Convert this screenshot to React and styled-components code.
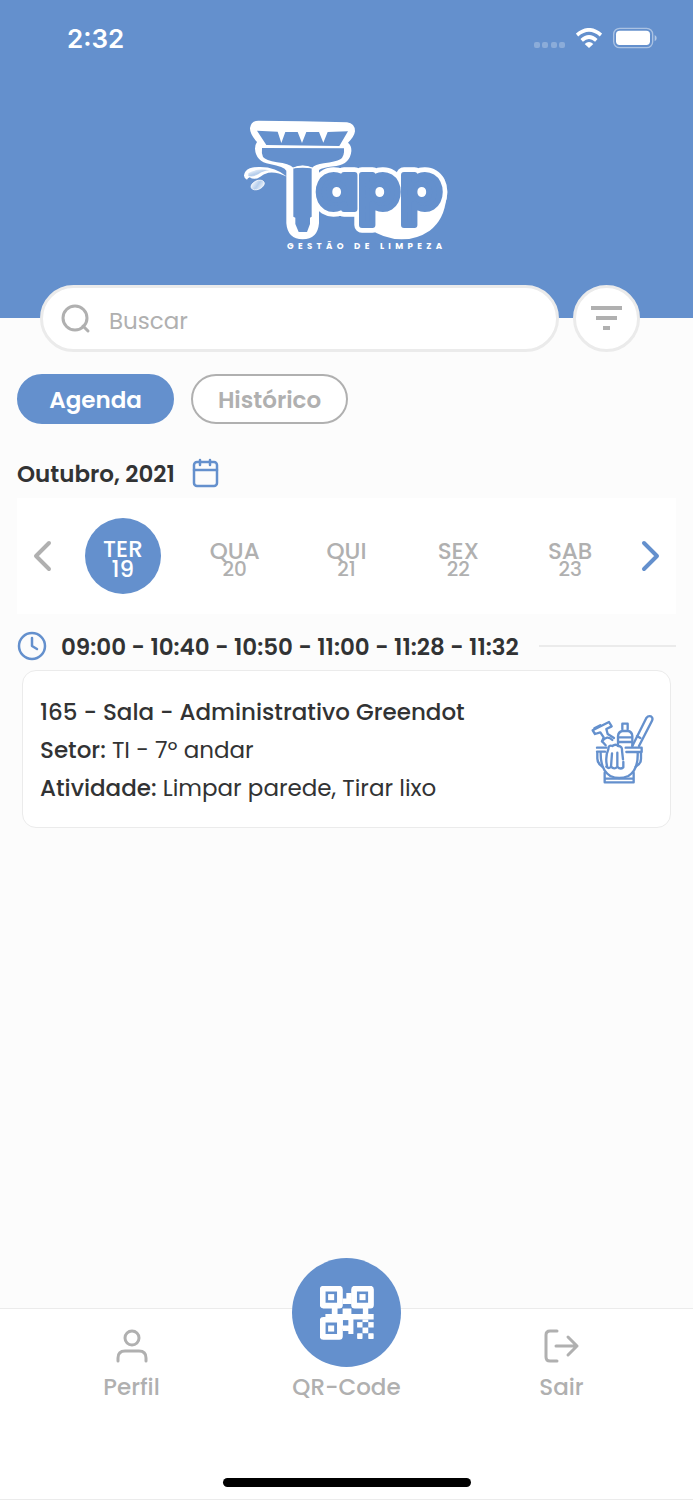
import React from 'react';
import styled, { createGlobalStyle } from 'styled-components';

const BLUE = '#6490cd';
const GRAY = '#b0b0b0';
const LINE = '#ebebeb';
const DARK = '#323334';

const DAYS = [
  { name: 'TER', date: 19 },
  { name: 'QUA', date: 20 },
  { name: 'QUI', date: 21 },
  { name: 'SEX', date: 22 },
  { name: 'SAB', date: 23 },
];
const TIMES = ['09:00', '10:40', '10:50', '11:00', '11:28', '11:32'];

const GlobalStyle = createGlobalStyle`
  * { box-sizing: border-box; }
  body {
    margin: 0;
    background: #fcfcfc;
    color: ${DARK};
    font-family: Poppins, Inter, "Liberation Sans", sans-serif;
    font-feature-settings: "cv11";
  }
  button, input {
    font: inherit;
    font-feature-settings: inherit;
    color: inherit;
  }
  button {
    padding: 0;
    border: 0;
    background: none;
    cursor: pointer;
  }
  svg { display: block; }
`;

const Screen = styled.div`
  display: flex;
  flex-direction: column;
  min-height: 100vh;
`;

const Header = styled.header`
  display: flex;
  flex-direction: column;
  height: 318px;
  background: ${BLUE};
  color: #fff;
`;

const StatusBar = styled.div`
  display: flex;
  align-items: center;
  justify-content: space-between;
  height: 76px;
  padding: 0 36px 0 67px;
`;

const Clock = styled.time`
  font-family: Inter, "Liberation Sans", sans-serif;
  font-size: 26px;
  font-weight: 600;
`;

const StatusIcons = styled.div`
  display: flex;
  align-items: center;
  gap: 11px;
`;

const Brand = styled.div`
  display: flex;
  justify-content: center;
  padding: 34px 4px 0 0;
`;

const SearchRow = styled.form`
  display: flex;
  gap: 14px;
  margin-top: -33px;
  padding: 0 53px 0 40px;
`;

const SearchBox = styled.label`
  display: flex;
  flex: 1;
  align-items: center;
  gap: 18px;
  min-width: 0;
  height: 67px;
  padding: 0 18px;
  border: 3px solid ${LINE};
  border-radius: 34px;
  background: #fff;
`;

const SearchInput = styled.input`
  flex: 1;
  width: 100%;
  min-width: 0;
  padding: 4px 0 0;
  border: 0;
  outline: 0;
  background: transparent;
  font-size: 23px;
  font-weight: 400;
  &::placeholder {
    color: ${GRAY};
    opacity: 1;
  }
`;

const FilterButton = styled.button`
  display: flex;
  flex: none;
  align-items: center;
  justify-content: center;
  width: 67px;
  height: 67px;
  border: 3px solid ${LINE};
  border-radius: 50%;
  background: #fff;
`;

const Content = styled.main`
  flex: 1;
  padding: 22px 17px;
`;

const Tabs = styled.div`
  display: flex;
  gap: 17px;
`;

const Tab = styled.button`
  width: 157px;
  height: 50px;
  padding-top: 2px;
  border: 2px solid ${p => (p.$active ? BLUE : GRAY)};
  border-radius: 25px;
  background: ${p => (p.$active ? BLUE : '#fff')};
  color: ${p => (p.$active ? '#fff' : GRAY)};
  font-size: 23px;
  font-weight: 600;
`;

const MonthRow = styled.div`
  display: flex;
  align-items: center;
  gap: 17px;
  height: 32px;
  margin-top: 33px;
`;

const MonthTitle = styled.h1`
  margin: 0;
  padding-top: 2px;
  font-size: 23px;
  font-weight: 600;
`;

const Week = styled.div`
  display: grid;
  grid-template-columns: 50px repeat(5, 1fr) 50px;
  align-items: center;
  justify-items: center;
  height: 116px;
  margin-top: 9px;
  background: #fff;
`;

const Day = styled.button`
  width: 76px;
  height: 76px;
  padding-top: 6px;
  border-radius: 50%;
  background: ${p => (p.$active ? BLUE : 'transparent')};
  color: ${p => (p.$active ? '#fff' : GRAY)};
  font-size: 23px;
  font-weight: 500;
  line-height: 20px;
`;

const DayNumber = styled.span`
  display: block;
  font-size: ${p => (p.$active ? 23 : 20)}px;
  line-height: ${p => (p.$active ? 20 : 16)}px;
`;

const TimeRow = styled.div`
  display: flex;
  align-items: center;
  gap: 14px;
  height: 56px;
  padding-top: 8px;
`;

const TimeText = styled.h2`
  margin: 0;
  padding-top: 2px;
  font-size: 23px;
  font-weight: 600;
  white-space: nowrap;
`;

const Rule = styled.hr`
  flex: 1;
  height: 2px;
  margin: 0 0 0 6px;
  border: 0;
  background: ${LINE};
`;

const Card = styled.article`
  display: flex;
  align-items: center;
  justify-content: space-between;
  height: 158px;
  margin: 0 5px;
  padding: 2px 15px 0 17px;
  border: 1px solid ${LINE};
  border-radius: 14px;
  background: #fff;
`;

const CardLine = styled.p`
  margin: 0;
  font-size: 23px;
  font-weight: ${p => (p.$title ? 500 : 400)};
  line-height: 38px;
`;

const Label = styled.strong`
  font-weight: 500;
`;

const BottomBar = styled.footer`
  display: flex;
  flex-direction: column;
  align-items: center;
  justify-content: space-between;
  height: 192px;
  padding-bottom: 12px;
  border-top: 1px solid ${LINE};
  border-bottom: 1px solid ${LINE};
  background: #fff;
`;

const Nav = styled.nav`
  display: grid;
  grid-template-columns: repeat(3, 1fr);
  align-items: end;
  width: 100%;
  height: 92px;
  padding: 0 24px;
`;

const NavLink = styled.a`
  display: flex;
  flex-direction: column;
  align-items: center;
  gap: 9px;
  color: ${GRAY};
  font-size: 23px;
  font-weight: 500;
  line-height: 28px;
  text-decoration: none;
`;

const QrCircle = styled.span`
  display: flex;
  align-items: center;
  justify-content: center;
  width: 109px;
  height: 109px;
  margin-top: -53px;
  margin-bottom: -3px;
  border-radius: 50%;
  background: ${BLUE};
`;

const HomeIndicator = styled.div`
  width: 248px;
  height: 9px;
  border-radius: 5px;
  background: #000;
`;

function LogoWord(props) {
  return (
    <text y="297" {...props}>
      <tspan x="246">a</tspan>
      <tspan x="370">p</tspan>
      <tspan x="496">p</tspan>
    </text>
  );
}

function Logo() {
  return (
    <svg width="220" height="150" viewBox="0 0 660 450" role="img" aria-label="Tapp">
      <defs>
        <linearGradient id="drop" x1="0" y1="0" x2="1" y2="1">
          <stop offset="0" stopColor="#fff" />
          <stop offset="0.5" stopColor="#b4cdec" />
          <stop offset="1" stopColor="#fff" />
        </linearGradient>
      </defs>
      {/* splash */}
      <path d="M36 209Q20 200 32 184Q44 170 76 171Q122 171 156 200Q124 184 100 188Q84 192 76 200Q58 212 44 202Q38 204 36 209Z" fill="#fff" />
      <path d="M40 190Q62 174 104 181Q84 182 70 193Q54 202 40 198Z" fill="url(#drop)" />
      <ellipse cx="68" cy="225" rx="21" ry="13" transform="rotate(-24 68 225)" fill="url(#drop)" stroke="#fff" strokeWidth="2" />
      {/* white base behind the letters */}
      <path d="M540 178Q590 168 616 200Q634 224 634 262Q628 330 584 362Q546 388 500 388Q444 386 404 356L400 290Z" fill="#fff" />
      <g fontFamily="Poppins, Inter, sans-serif" fontWeight="700" fontSize="182" strokeLinejoin="round">
        <LogoWord fill="#fff" stroke="#fff" strokeWidth="46" />
        <path d="M70 32L200 34L336 37Q360 40 360 64Q358 80 339 98Q350 106 349 124Q345 162 304 168Q262 172 252 180V340Q248 388 203 388Q158 388 154 340V182Q148 170 104 162Q62 154 60 116Q60 104 66 96Q44 72 45 54Q48 32 70 32Z" fill="#fff" />
        <LogoWord fill={BLUE} stroke={BLUE} strokeWidth="18" />
      </g>
      <path d="M66 62L128 65L139 99L151 66L188 66L201 99L214 66L252 66L265 98L278 66L339 64L313 108L94 105Z" fill={BLUE} />
      <path d="M81 114L327 115Q329 140 316 148Q302 156 266 160Q240 164 231 173Q203 162 175 173Q162 161 126 157Q92 151 84 141Q79 130 81 114Z" fill={BLUE} />
      <path d="M175 175Q203 171 230 175V320L225 323V342L216 366H191L181 342V323L175 320Z" fill={BLUE} />
      <path d="M175 174Q203 163 231 174" fill="none" stroke="#fff" strokeWidth="4" />
      <text x="156" y="417" fill="#fff" fontFamily="Poppins, Inter, sans-serif" fontWeight="700" fontSize="26" letterSpacing="13">GESTÃO DE LIMPEZA</text>
    </svg>
  );
}

function SignalIcon() {
  return (
    <svg width="31" height="20" fill="#fff" opacity="0.25">
      {[0, 8, 17, 25].map(x => <rect key={x} x={x} y="14" width="6" height="6" rx="2" />)}
    </svg>
  );
}

function WifiIcon() {
  return (
    <svg width="26" height="20" viewBox="0 0 78 60" fill="none" stroke="#fff" strokeWidth="11">
      <path d="M3 21Q39 -10 75 21" />
      <path d="M17 37Q39 17 61 37" />
      <path d="M39 60L26 48Q39 36 52 48Z" fill="#fff" stroke="none" />
    </svg>
  );
}

function BatteryIcon() {
  return (
    <svg width="44" height="22" viewBox="0 0 132 66">
      <rect x="2" y="4" width="117" height="58" rx="18" fill="none" stroke="#fff" strokeOpacity="0.45" strokeWidth="4" />
      <rect x="9" y="11" width="102" height="43" rx="11" fill="#fff" />
      <path d="M125 24Q131 27 131 33Q131 40 125 43Z" fill="#fff" fillOpacity="0.5" />
    </svg>
  );
}

function SearchIcon() {
  return (
    <svg width="30" height="30" fill="none" stroke={GRAY} strokeWidth="3" strokeLinecap="round">
      <circle cx="14" cy="14" r="12" />
      <path d="M22 22L27 27" />
    </svg>
  );
}

function FilterIcon() {
  return (
    <svg width="32" height="26" fill={GRAY}>
      <rect x="0" y="0" width="31" height="4" />
      <rect x="5" y="10" width="21" height="4" />
      <rect x="12" y="20" width="7" height="4" />
    </svg>
  );
}

function CalendarIcon() {
  return (
    <svg width="27" height="30" viewBox="0 0 27 30" fill="none" stroke={BLUE} strokeWidth="2.5" strokeLinecap="round">
      <rect x="2" y="4" width="23" height="24" rx="3" />
      <path d="M2 12H25M8 2V7M18 2V7" />
    </svg>
  );
}

function Chevron({ color, flip }) {
  return (
    <svg width="20" height="32" fill="none" stroke={color} strokeWidth="4" strokeLinecap="round" strokeLinejoin="round">
      <path d={flip ? 'M3 3L16 16L3 29' : 'M17 3L4 16L17 29'} />
    </svg>
  );
}

function ClockIcon() {
  return (
    <svg width="30" height="30" fill="none" stroke={BLUE} strokeWidth="2.5" strokeLinecap="round" strokeLinejoin="round">
      <circle cx="15" cy="15" r="13" />
      <path d="M15 7V15L20 18" />
    </svg>
  );
}

function BucketIcon() {
  return (
    <svg width="64" height="72" viewBox="34 42 192 216" fill="none" stroke={BLUE} strokeWidth="7" strokeLinecap="round" strokeLinejoin="round">
      {/* spray bottle */}
      <path d="M39 91L88 66L96 79L80 87L84 102L103 114M39 91L46 102L62 97L72 112L67 124L78 136M44 85L62 76" />
      <path d="M67 124Q82 104 98 120" />
      {/* bottle */}
      <path d="M128 88V71H144V88M115 138V108Q116 96 128 93H146Q157 96 158 108V138M115 112H158M115 126H158" />
      {/* brush */}
      <path d="M158 138L200 54Q206 46 214 49Q221 54 217 62L178 138M172 108L182 114" />
      {/* bucket */}
      <path d="M52 143H80M52 155H76M138 143H186V156H140" />
      <path d="M53 158V176Q54 192 68 200M184 158V176Q184 192 168 200" />
      <path d="M63 158Q62 210 92 228Q118 240 146 228Q176 210 174 158" />
      <path d="M75 218V247H162V218M78 236H160" />
      {/* cloth */}
      <path d="M82 198Q76 170 86 148Q86 134 98 138Q108 130 116 138Q128 138 127 152L130 178" />
      <path d="M97 160L94 200Q88 208 80 200M113 158V200Q104 210 94 200M131 186V202Q122 210 113 200" />
    </svg>
  );
}

function UserIcon() {
  return (
    <svg width="32" height="36" viewBox="0 0 32 36" fill="none" stroke={GRAY} strokeWidth="3" strokeLinecap="round">
      <circle cx="16" cy="10" r="7" />
      <path d="M2 33V30Q2 23 9 23H23Q30 23 30 30V33" />
    </svg>
  );
}

function LogoutIcon() {
  return (
    <svg width="36" height="36" viewBox="0 0 36 36" fill="none" stroke={GRAY} strokeWidth="3" strokeLinecap="round" strokeLinejoin="round">
      <path d="M13 3H6Q2 3 2 7V29Q2 33 6 33H13" />
      <path d="M12 18H33M24 9L33 18L24 27" />
    </svg>
  );
}

function QrIcon() {
  return (
    <svg width="54" height="54" viewBox="14 13 160 160">
      <g fill="none" stroke="#fff" strokeWidth="17">
        <rect x="22" y="21" width="51" height="50" rx="2" />
        <rect x="115" y="21" width="50" height="50" rx="2" />
        <rect x="22" y="113" width="51" height="51" rx="2" />
      </g>
      <g fill="#fff">
        <rect x="38" y="37" width="18" height="18" />
        <rect x="131" y="37" width="18" height="18" />
        <rect x="38" y="130" width="18" height="18" />
        {/* links between the squares */}
        <path d="M81 50H92V34H108V66H81Z" />
        <path d="M49 78H66V96H81V80H107V96H141V78H157V96H173V112H113V155H98V146H81V140H66V112H30V96H49Z" />
        <rect x="124" y="120" width="16" height="16" />
        <rect x="157" y="120" width="16" height="16" />
        <rect x="140" y="112" width="17" height="8" />
        <rect x="140" y="136" width="17" height="17" />
        <rect x="124" y="153" width="16" height="17" rx="2" />
        <rect x="157" y="153" width="16" height="17" rx="2" />
      </g>
      <rect x="82" y="114" width="16" height="16" fill={BLUE} />
    </svg>
  );
}

function App() {
  const [tab, setTab] = React.useState('Agenda');
  const [selected, setSelected] = React.useState(19);

  return (
    <Screen>
      <GlobalStyle />
      <Header>
        <StatusBar>
          <Clock>2:32</Clock>
          <StatusIcons>
            <SignalIcon />
            <WifiIcon />
            <BatteryIcon />
          </StatusIcons>
        </StatusBar>
        <Brand><Logo /></Brand>
      </Header>

      <SearchRow onSubmit={e => e.preventDefault()}>
        <SearchBox>
          <SearchIcon />
          <SearchInput type="text" placeholder="Buscar" aria-label="Buscar" />
        </SearchBox>
        <FilterButton type="button" aria-label="Filtrar"><FilterIcon /></FilterButton>
      </SearchRow>

      <Content>
        <Tabs>
          {['Agenda', 'Histórico'].map(name => (
            <Tab key={name} $active={tab === name} onClick={() => setTab(name)}>{name}</Tab>
          ))}
        </Tabs>

        <MonthRow>
          <MonthTitle>Outubro, 2021</MonthTitle>
          <button aria-label="Calendário"><CalendarIcon /></button>
        </MonthRow>

        <Week>
          <button aria-label="Anterior"><Chevron color={GRAY} /></button>
          {DAYS.map(({ name, date }) => (
            <Day key={date} $active={selected === date} onClick={() => setSelected(date)}>
              {name}
              <DayNumber $active={selected === date}>{date}</DayNumber>
            </Day>
          ))}
          <button aria-label="Próximo"><Chevron color={BLUE} flip /></button>
        </Week>

        <TimeRow>
          <ClockIcon />
          <TimeText>{TIMES.join(' - ')}</TimeText>
          <Rule />
        </TimeRow>

        <Card>
          <div>
            <CardLine $title>165 - Sala - Administrativo Greendot</CardLine>
            <CardLine><Label>Setor:</Label> TI - 7º andar</CardLine>
            <CardLine><Label>Atividade:</Label> Limpar parede, Tirar lixo</CardLine>
          </div>
          <BucketIcon />
        </Card>
      </Content>

      <BottomBar>
        <Nav>
          <NavLink href="#perfil"><UserIcon />Perfil</NavLink>
          <NavLink href="#qrcode"><QrCircle><QrIcon /></QrCircle>QR-Code</NavLink>
          <NavLink href="#sair"><LogoutIcon />Sair</NavLink>
        </Nav>
        <HomeIndicator />
      </BottomBar>
    </Screen>
  );
}

export default App;
